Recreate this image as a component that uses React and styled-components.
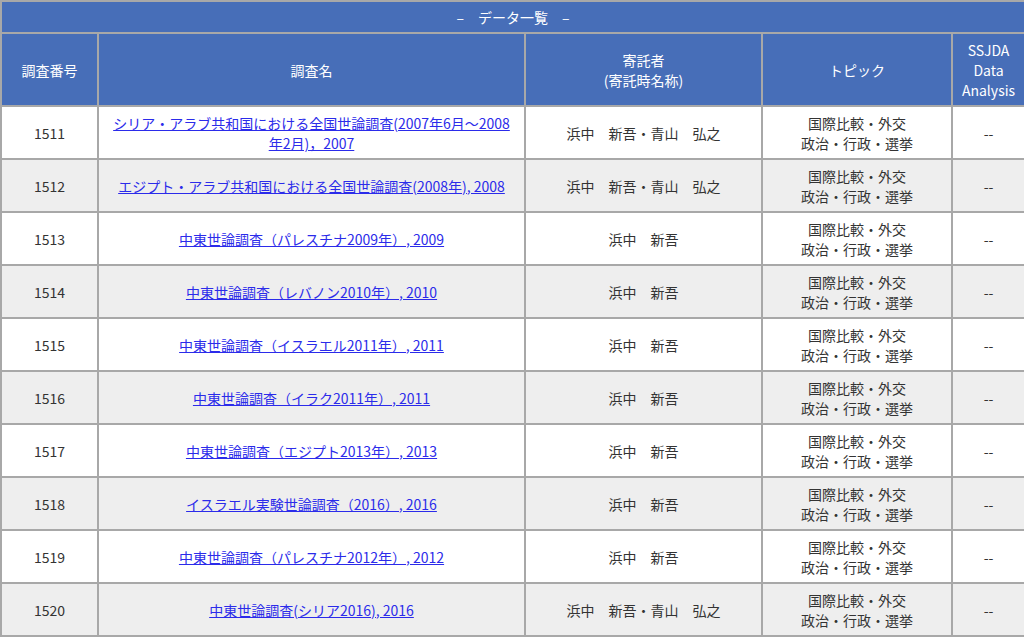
import React from 'react'
import styled, { createGlobalStyle } from 'styled-components'

const GlobalStyle = createGlobalStyle`
  body {
    margin: 0;
    background: #fff;
    font-family: "Noto Sans CJK JP", "Noto Sans", sans-serif;
  }
`

const Table = styled.table`
  width: 1024px;
  table-layout: fixed;
  border-collapse: collapse;
  font-size: 14px;
  line-height: 20px;
  color: #333;
`

const TitleCell = styled.th`
  height: 30px;
  padding: 0;
  background: #476eb8;
  color: #fff;
  font-weight: normal;
  border: 2px solid #a8a8a8;
  text-align: center;
`

const HeadCell = styled.th`
  height: 71px;
  padding: 0 4px;
  background: #476eb8;
  color: #fff;
  font-weight: normal;
  border: 2px solid #a8a8a8;
  text-align: center;
  vertical-align: middle;
`

const Row = styled.tr`
  background: ${(p) => (p.$alt ? '#eeeeee' : '#ffffff')};
`

const Cell = styled.td`
  height: 51px;
  padding: 0 10px;
  border: 2px solid #a8a8a8;
  text-align: center;
  vertical-align: middle;
`

const TitleLink = styled.a`
  color: #2b2bea;
  text-decoration: underline;
`

const rows = [
  { id: 1511, title: 'シリア・アラブ共和国における全国世論調査(2007年6月～2008年2月)，2007', who: '浜中　新吾・青山　弘之' },
  { id: 1512, title: 'エジプト・アラブ共和国における全国世論調査(2008年), 2008', who: '浜中　新吾・青山　弘之' },
  { id: 1513, title: '中東世論調査（パレスチナ2009年）, 2009', who: '浜中　新吾' },
  { id: 1514, title: '中東世論調査（レバノン2010年）, 2010', who: '浜中　新吾' },
  { id: 1515, title: '中東世論調査（イスラエル2011年）, 2011', who: '浜中　新吾' },
  { id: 1516, title: '中東世論調査（イラク2011年）, 2011', who: '浜中　新吾' },
  { id: 1517, title: '中東世論調査（エジプト2013年）, 2013', who: '浜中　新吾' },
  { id: 1518, title: 'イスラエル実験世論調査（2016）, 2016', who: '浜中　新吾' },
  { id: 1519, title: '中東世論調査（パレスチナ2012年）, 2012', who: '浜中　新吾' },
  { id: 1520, title: '中東世論調査(シリア2016), 2016', who: '浜中　新吾・青山　弘之' },
]

export default function App() {
  return (
    <>
      <GlobalStyle />
      <Table>
        <colgroup>
          <col style={{ width: 97 }} />
          <col style={{ width: 427 }} />
          <col style={{ width: 237 }} />
          <col style={{ width: 190 }} />
          <col style={{ width: 73 }} />
        </colgroup>
        <thead>
          <tr>
            <TitleCell colSpan={5}>–　データ一覧　–</TitleCell>
          </tr>
          <tr>
            <HeadCell>調査番号</HeadCell>
            <HeadCell>調査名</HeadCell>
            <HeadCell>寄託者<br />(寄託時名称)</HeadCell>
            <HeadCell>トピック</HeadCell>
            <HeadCell>SSJDA<br />Data<br />Analysis</HeadCell>
          </tr>
        </thead>
        <tbody>
          {rows.map((r, i) => (
            <Row key={r.id} $alt={i % 2 === 1}>
              <Cell>{r.id}</Cell>
              <Cell>
                <TitleLink href="#">{r.title}</TitleLink>
              </Cell>
              <Cell>{r.who}</Cell>
              <Cell>国際比較・外交<br />政治・行政・選挙</Cell>
              <Cell>--</Cell>
            </Row>
          ))}
        </tbody>
      </Table>
    </>
  )
}
